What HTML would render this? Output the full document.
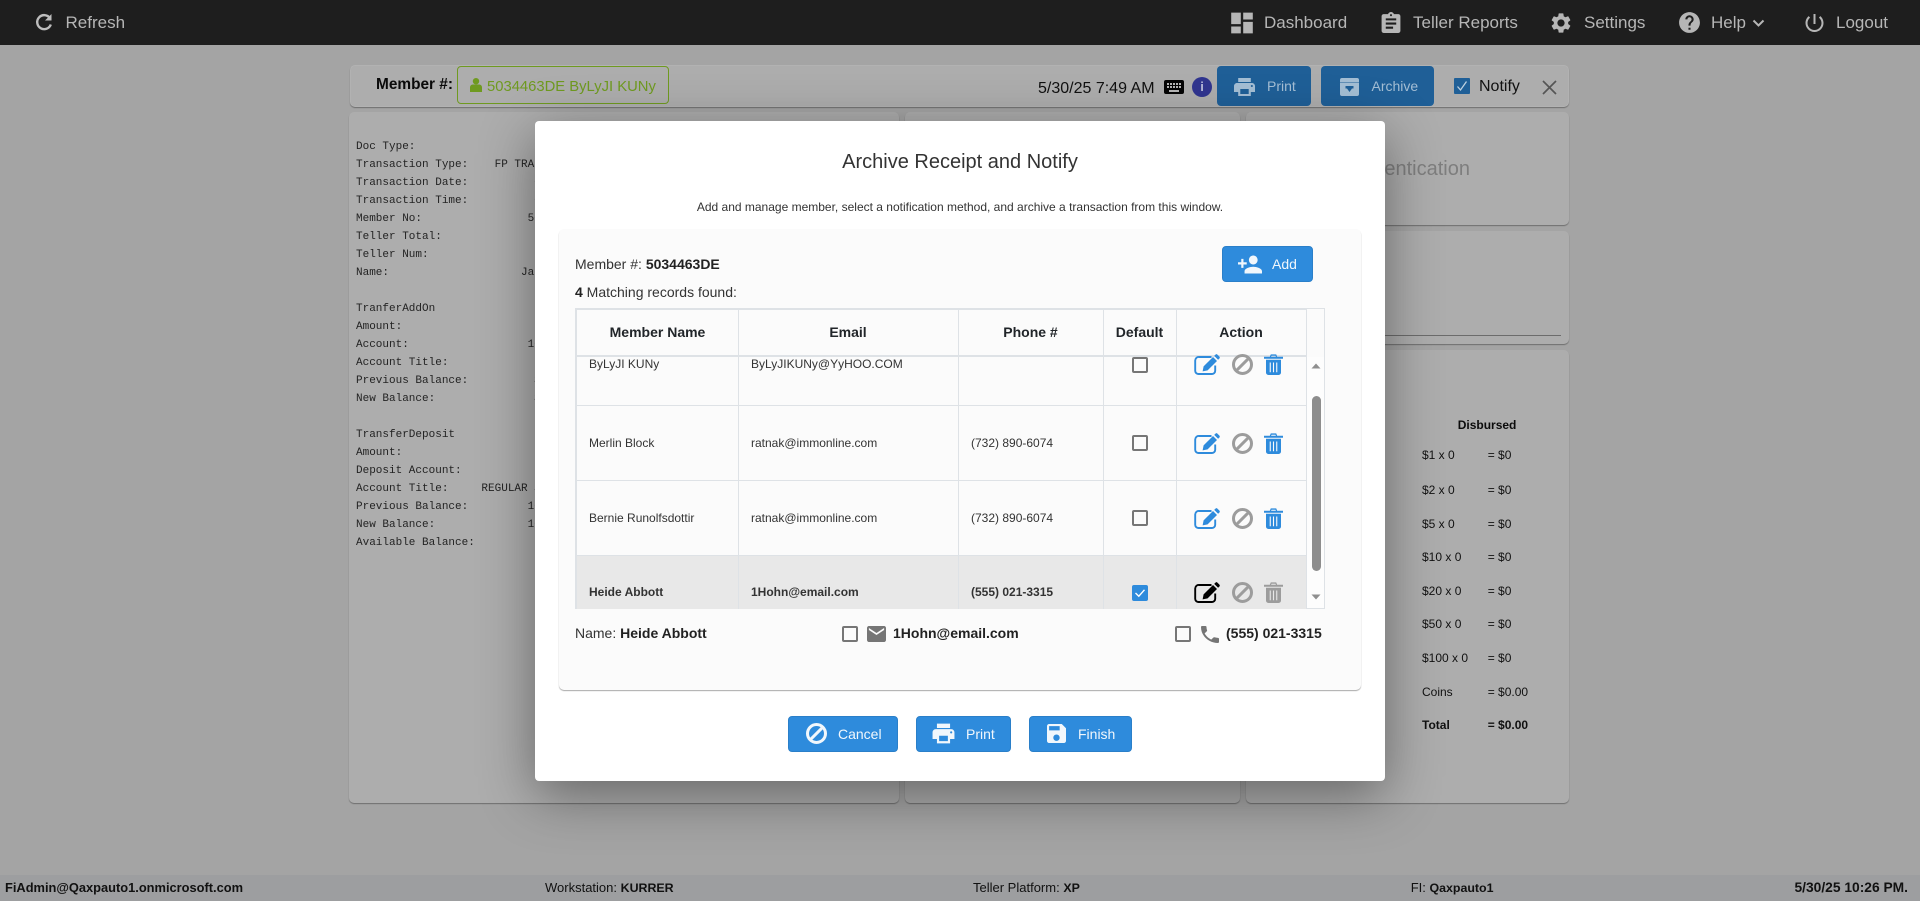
<!DOCTYPE html>
<html lang="en"><head><meta charset="utf-8"><title>Archive Receipt and Notify</title>
<style>
html,body{margin:0;padding:0}
body{width:1920px;height:901px;position:relative;overflow:hidden;background:#a4a4a4;font-family:"Liberation Sans",Arial,sans-serif;color:#333}
.a,.t{position:absolute;white-space:nowrap}
.t{line-height:20px}
svg{position:absolute;display:block}
.nav{font-size:17px;color:#b6b6b6}
.panel{position:absolute;background:#adadad;border-radius:5px;box-shadow:0 1px 1px #6e6e6e}
.btn{position:absolute;background:#2e8bdc;border:1px solid #2a7fc9;border-radius:4px;box-sizing:border-box}
.wt{color:#f1f7fc;font-size:14px}
.dbtn{position:absolute;background:#1f5f97;border-radius:4px}
.dt{color:#a4bed4;font-size:14px}
.mono{position:absolute;left:356px;top:138px;margin:0;font:11px/18px "Liberation Mono",monospace;color:#232323}
.m{font-size:12px;color:#111}
.h{font-weight:bold;font-size:14px;color:#212529;text-align:center}
.c{font-size:12px;color:#333}
.cb{position:absolute;width:16px;height:16px;box-sizing:border-box;border:2px solid #767676;border-radius:2px;background:#fbfbfb}
.vl{position:absolute;width:1px;background:#dee2e6}
.hl{position:absolute;height:1px;background:#dee2e6}
.f{font-size:13px;color:#111}
.f b{font-size:12.4px}
</style></head><body>
<svg width="0" height="0" style="position:absolute">
<defs>
<symbol id="edit" viewBox="0 0 26 21">
<path d="M17.5 3H5A3.500 3.500 0 0 0 1.200 6.500V16.800A3.200 3.200 0 0 0 4.400 20H18a3.200 3.200 0 0 0 3.200-3.200V11.500" fill="none" stroke="currentColor" stroke-width="1.900"/>
<path d="M9.600 12.400 19 3l4 4-9.400 9.400-5 1z" fill="currentColor"/>
<path d="M20.200 1.900l1.200-1.200a1.500 1.500 0 0 1 2.100 0l1.800 1.800a1.500 1.500 0 0 1 0 2.100l-1.200 1.200z" fill="currentColor"/>
</symbol>
<symbol id="block" viewBox="0 0 21 21">
<circle cx="10.500" cy="10.500" r="9" fill="none" stroke="currentColor" stroke-width="3"/>
<path d="M4.200 16.800 16.800 4.200" stroke="currentColor" stroke-width="3"/>
</symbol>
<symbol id="trash" viewBox="0 0 19 21">
<path d="M0 2.800h5.800l1-2.400h5.400l1 2.400H19v2H0zM7.600 1.800 7 2.800h5l-.6-1z" fill="currentColor" fill-rule="evenodd"/>
<path d="M2 5.800h15v12.800a2.400 2.400 0 0 1-2.400 2.400H4.400A2.400 2.400 0 0 1 2 18.600zM5.700 8.500v9.800h1.100V8.500zM8.950 8.500v9.800h1.100V8.500zM12.200 8.500v9.800h1.100V8.500z" fill="currentColor" fill-rule="evenodd"/>
</symbol>
</defs>
</svg>

<!-- header -->
<div class="a" style="left:0;top:0;width:1920px;height:45px;background:#1e1e1e"></div>
<svg style="left:35px;top:13px" width="18" height="19" viewBox="0 0 18 19"><path d="M15 5.200A7 7 0 1 0 15.800 11.500" fill="none" stroke="#bdbdbd" stroke-width="2.400"/><path d="M16.500 1v6.500H10z" fill="#bdbdbd"/></svg>
<div class="t nav" style="left:65.500px;top:12.500px">Refresh</div>
<svg style="left:1230px;top:12px" width="24" height="22" viewBox="2 2.500 20 19" preserveAspectRatio="none" fill="#b6b6b6"><path d="M3 13h8V3H3v10zm0 8h8v-6H3v6zm10 0h8V11h-8v10zm0-18v6h8V3h-8z"/></svg>
<div class="t nav" style="left:1264px;top:12.500px">Dashboard</div>
<svg style="left:1379px;top:11px" width="24" height="23" viewBox="1 0 22 22" fill="#b6b6b6"><path d="M19 3h-4.180C14.400 1.840 13.300 1 12 1c-1.300 0-2.400.84-2.820 2H5c-1.100 0-2 .9-2 2v14c0 1.100.9 2 2 2h14c1.100 0 2-.9 2-2V5c0-1.100-.9-2-2-2zm-7 0c.55 0 1 .45 1 1s-.45 1-1 1-1-.45-1-1 .45-1 1-1zm2 14H7v-2h7v2zm3-4H7v-2h10v2zm0-4H7V7h10v2z"/></svg>
<div class="t nav" style="left:1413px;top:12.500px">Teller Reports</div>
<svg style="left:1549px;top:11px" width="24" height="24" viewBox="0 0 24 24" fill="#b6b6b6"><path d="M19.140 12.940c.04-.3.06-.61.06-.94 0-.32-.02-.64-.07-.94l2.030-1.580c.18-.14.23-.41.12-.61l-1.920-3.320c-.12-.22-.37-.29-.59-.22l-2.390.96c-.5-.38-1.030-.7-1.620-.94l-.36-2.540c-.04-.24-.24-.41-.48-.41h-3.840c-.24 0-.43.17-.47.41l-.36 2.540c-.59.24-1.130.57-1.620.94l-2.390-.96c-.22-.08-.47 0-.59.22L2.740 8.870c-.12.21-.08.47.12.61l2.030 1.580c-.05.3-.09.63-.09.94s.02.64.07.94l-2.030 1.580c-.18.14-.23.41-.12.61l1.920 3.320c.12.22.37.29.59.22l2.390-.96c.5.38 1.030.7 1.620.94l.36 2.540c.05.24.24.41.48.41h3.840c.24 0 .44-.17.47-.41l.36-2.540c.59-.24 1.130-.56 1.620-.94l2.390.96c.22.08.47 0 .59-.22l1.920-3.320c.12-.22.07-.47-.12-.61l-2.010-1.580zM12 15.600c-1.980 0-3.600-1.620-3.600-3.600s1.620-3.600 3.600-3.600 3.600 1.620 3.600 3.600-1.620 3.600-3.600 3.600z"/></svg>
<div class="t nav" style="left:1584px;top:12.500px">Settings</div>
<svg style="left:1677px;top:10px" width="25" height="25" viewBox="0 0 24 24" fill="#b6b6b6"><path d="M12 2C6.480 2 2 6.480 2 12s4.480 10 10 10 10-4.480 10-10S17.520 2 12 2zm1 17h-2v-2h2v2zm2.070-7.750l-.9.92C13.450 12.900 13 13.500 13 15h-2v-.5c0-1.100.45-2.100 1.170-2.830l1.240-1.260c.37-.36.59-.86.59-1.410 0-1.100-.9-2-2-2s-2 .9-2 2H8c0-2.210 1.790-4 4-4s4 1.790 4 4c0 .88-.36 1.680-.93 2.250z"/></svg>
<div class="t nav" style="left:1711px;top:12.500px">Help</div>
<svg style="left:1752px;top:19px" width="13" height="9" viewBox="0 0 13 9"><path d="M1.500 1.500 6.500 6.500 11.500 1.500" fill="none" stroke="#b6b6b6" stroke-width="2"/></svg>
<svg style="left:1802px;top:11px" width="25" height="24" viewBox="0 0 24 24" fill="#b6b6b6"><path d="M13 3h-2v10h2V3zm4.830 2.170l-1.420 1.420C17.990 7.860 19 9.810 19 12c0 3.870-3.130 7-7 7s-7-3.130-7-7c0-2.190 1.010-4.140 2.580-5.420L6.170 5.170C4.230 6.820 3 9.260 3 12c0 4.970 4.030 9 9 9s9-4.030 9-9c0-2.740-1.230-5.180-3.170-6.830z"/></svg>
<div class="t nav" style="left:1836px;top:12.500px">Logout</div>

<!-- member bar -->
<div class="panel" style="left:350px;top:65px;width:1219px;height:42px;box-sizing:border-box;border:1px solid #b2b2b2"></div>
<div class="t" style="left:376px;top:74.500px;font-size:15.400px;font-weight:bold;color:#0a0a0a">Member #:</div>
<div class="a" style="left:457px;top:66px;width:212px;height:38px;box-sizing:border-box;border:1px solid #6f9a20;border-radius:4px"></div>
<svg style="left:470px;top:78px" width="12" height="14" viewBox="0 0 12 14" fill="#6f9a20"><circle cx="6" cy="3.200" r="3.200"/><path d="M0 14V9.500C0 7.500 1.500 6.500 3 6.500h6c1.500 0 3 1 3 3V14z"/></svg>
<div class="t" style="left:487px;top:77px;font-size:14.800px;color:#6f9a20">5034463DE ByLyJI KUNy</div>
<div class="t" style="left:1038px;top:78.500px;font-size:16px;color:#111">5/30/25 7:49 AM</div>
<div class="a" style="left:1164px;top:80px;width:20px;height:14px;background:#050505;border-radius:2px"></div>
<div class="a" style="left:1166.500px;top:82.500px;width:15px;height:2px;background:repeating-linear-gradient(90deg,#b5b5b5 0 2px,#050505 2px 3px)"></div>
<div class="a" style="left:1166.500px;top:85.500px;width:15px;height:2px;background:repeating-linear-gradient(90deg,#b5b5b5 0 2px,#050505 2px 3px)"></div>
<div class="a" style="left:1169px;top:89.500px;width:10px;height:2px;background:#b5b5b5"></div>
<div class="a" style="left:1192px;top:77px;width:20px;height:20px;border-radius:50%;background:#30358f;color:#b8bada;font:bold 13px/20px 'Liberation Sans',sans-serif;text-align:center">i</div>
<div class="dbtn" style="left:1217px;top:66px;width:94px;height:40px"></div>
<svg style="left:1234px;top:78px" width="21" height="18" viewBox="2 3 20 18" preserveAspectRatio="none" fill="#a4bed4"><path d="M19 8H5c-1.660 0-3 1.340-3 3v6h4v4h12v-4h4v-6c0-1.660-1.340-3-3-3zm-3 11H8v-5h8v5zm3-7c-.55 0-1-.45-1-1s.45-1 1-1 1 .45 1 1-.45 1-1 1zm-1-9H6v4h12V3z"/></svg>
<div class="t dt" style="left:1267px;top:76px">Print</div>
<div class="dbtn" style="left:1321px;top:66px;width:113px;height:40px"></div>
<svg style="left:1340px;top:78px" width="19" height="18" viewBox="0 0 19 18"><path d="M2 0h15a2 2 0 0 1 2 2v2.500H0V2a2 2 0 0 1 2-2zM0 5h19v11a2 2 0 0 1-2 2H2a2 2 0 0 1-2-2z" fill="#a4bed4"/><path d="M5.500 8h8v2.500h-1.500L9.500 14 7 10.500H5.500z" fill="#1f5f97"/></svg>
<div class="t dt" style="left:1371.500px;top:76px">Archive</div>
<div class="a" style="left:1454px;top:78px;width:16px;height:16px;background:#1f5f97;border-radius:1px"></div>
<svg style="left:1454px;top:78px" width="16" height="16" viewBox="0 0 16 16"><path d="M3.500 8.500 6.500 12 12.500 3.500" fill="none" stroke="#bcd0e0" stroke-width="1.300"/></svg>
<div class="t" style="left:1479px;top:76.500px;font-size:16px;color:#111">Notify</div>
<svg style="left:1542px;top:80px" width="15" height="15" viewBox="0 0 15 15"><path d="M1 1 14 14M14 1 1 14" stroke="#555" stroke-width="1.700"/></svg>

<!-- background panels -->
<div class="panel" style="left:349px;top:112px;width:550px;height:691px"></div>
<pre class="mono">Doc Type:
Transaction Type:    FP TRANSFER
Transaction Date:          05/30/25
Transaction Time:          07:49
Member No:                5034463DE
Teller Total:
Teller Num:
Name:                    Jane

TranferAddOn
Amount:
Account:                  1000
Account Title:
Previous Balance:          $0
New Balance:               $0

TransferDeposit
Amount:
Deposit Account:
Account Title:     REGULAR SAVINGS
Previous Balance:         1000
New Balance:              1000
Available Balance:</pre>
<div class="panel" style="left:905px;top:112px;width:335px;height:691px"></div>
<div class="panel" style="left:1246px;top:112px;width:323px;height:113px"></div>
<div class="t" style="right:450px;top:158.500px;font-size:20px;color:#7e7e7e">Authentication</div>
<div class="panel" style="left:1246px;top:231px;width:323px;height:113px"></div>
<div class="a" style="left:1260px;top:335px;width:301px;height:1px;background:#6c6c6c"></div>
<div class="panel" style="left:1246px;top:350px;width:323px;height:453px"></div>
<div class="t" style="left:1457.700px;top:415px;font-size:12px;font-weight:bold;color:#0c0c0c">Disbursed</div>
<div class="t m" style="left:1422px;top:445px">$1 x 0</div><div class="t m" style="left:1487.700px;top:445px">= $0</div>
<div class="t m" style="left:1422px;top:479.700px">$2 x 0</div><div class="t m" style="left:1487.700px;top:479.700px">= $0</div>
<div class="t m" style="left:1422px;top:513.700px">$5 x 0</div><div class="t m" style="left:1487.700px;top:513.700px">= $0</div>
<div class="t m" style="left:1422px;top:546.700px">$10 x 0</div><div class="t m" style="left:1487.700px;top:546.700px">= $0</div>
<div class="t m" style="left:1422px;top:580.700px">$20 x 0</div><div class="t m" style="left:1487.700px;top:580.700px">= $0</div>
<div class="t m" style="left:1422px;top:613.700px">$50 x 0</div><div class="t m" style="left:1487.700px;top:613.700px">= $0</div>
<div class="t m" style="left:1422px;top:647.700px">$100 x 0</div><div class="t m" style="left:1487.700px;top:647.700px">= $0</div>
<div class="t m" style="left:1422px;top:681.700px">Coins</div><div class="t m" style="left:1487.700px;top:681.700px">= $0.00</div>
<div class="t m" style="left:1422px;top:714.700px;font-weight:bold">Total</div><div class="t m" style="left:1487.700px;top:714.700px;font-weight:bold">= $0.00</div>

<!-- footer -->
<div class="a" style="left:0;top:875px;width:1920px;height:26px;background:#9d9ea0"></div>
<div class="t f" style="left:5px;top:878px;font-weight:bold;font-size:12.850px">FiAdmin@Qaxpauto1.onmicrosoft.com</div>
<div class="t f" style="left:545px;top:878px">Workstation: <b>KURRER</b></div>
<div class="t f" style="left:973px;top:878px">Teller Platform: <b>XP</b></div>
<div class="t f" style="left:1410.700px;top:878px">FI: <b>Qaxpauto1</b></div>
<div class="t f" style="right:12px;top:878px;font-weight:bold;font-size:13.800px">5/30/25 10:26 PM.</div>

<!-- modal -->
<div class="a" style="left:535px;top:121px;width:850px;height:660px;background:#fff;border-radius:4px;box-shadow:0 14px 55px rgba(0,0,0,.42)"></div>
<div class="t" style="left:535px;width:850px;text-align:center;top:151.500px;font-size:20px;color:#333">Archive Receipt and Notify</div>
<div class="t" style="left:535px;width:850px;text-align:center;top:197px;font-size:12px;color:#333">Add and manage member, select a notification method, and archive a transaction from this window.</div>
<div class="a" style="left:559px;top:229px;width:802px;height:461px;background:#fbfbfb;border-radius:5px;box-shadow:0 1px 1px #a8a8a8"></div>

<div class="t" style="left:575px;top:254px;font-size:14px;color:#333">Member #: <b style="color:#222">5034463DE</b></div>
<div class="t" style="left:575px;top:282px;font-size:14px;color:#333"><b style="color:#222">4</b> Matching records found:</div>

<div class="btn" style="left:1222px;top:246px;width:91px;height:36px"></div>
<svg style="left:1238px;top:255px" width="24" height="19" viewBox="1 3.500 22 17" preserveAspectRatio="none" fill="#f1f7fc"><path d="M15 12c2.210 0 4-1.790 4-4s-1.790-4-4-4-4 1.790-4 4 1.790 4 4 4zm-9-2V7H4v3H1v2h3v3h2v-3h3v-2H6zm9 4c-2.670 0-8 1.340-8 4v2h16v-2c0-2.660-5.330-4-8-4z"/></svg>
<div class="t wt" style="left:1272px;top:254px">Add</div>

<!-- table -->
<div class="a" style="left:575px;top:308px;width:750px;height:301px;background:#fbfbfb;overflow:hidden">
  <!-- selected row -->
  <div class="a" style="left:0;top:247px;width:731px;height:54px;background:#e8e8e8"></div>
  <div class="hl" style="left:0;top:97px;width:731px"></div>
  <div class="hl" style="left:0;top:172px;width:731px"></div>
  <div class="hl" style="left:0;top:247px;width:731px"></div>
  <div class="vl" style="left:163px;top:0;height:301px"></div>
  <div class="vl" style="left:383px;top:0;height:301px"></div>
  <div class="vl" style="left:528px;top:0;height:301px"></div>
  <div class="vl" style="left:601px;top:0;height:301px"></div>
  <div class="vl" style="left:731px;top:0;height:301px"></div>
  <div class="a" style="left:0;top:0;width:2px;height:301px;background:#dee2e6"></div>
  <div class="a" style="left:0;top:0;width:731px;height:2px;background:#dee2e6"></div>
  <div class="a" style="left:749px;top:0;width:1px;height:301px;background:#dee2e6"></div>
  <div class="a" style="left:731px;top:0;width:19px;height:1px;background:#dee2e6"></div>
  <div class="a" style="left:731px;top:300px;width:19px;height:1px;background:#dee2e6"></div>
  <div class="a" style="left:0;top:47px;width:731px;height:2px;background:#dee2e6"></div>
  <!-- headers -->
  <div class="t h" style="left:2px;width:161px;top:14px">Member Name</div>
  <div class="t h" style="left:163px;width:220px;top:14px">Email</div>
  <div class="t h" style="left:383px;width:145px;top:14px">Phone #</div>
  <div class="t h" style="left:528px;width:73px;top:14px">Default</div>
  <div class="t h" style="left:601px;width:130px;top:14px">Action</div>
  <!-- rows -->
  <div class="t c" style="left:14px;top:46px">ByLyJI KUNy</div>
  <div class="t c" style="left:176px;top:46px">ByLyJIKUNy@YyHOO.COM</div>
  <div class="t c" style="left:14px;top:124.700px">Merlin Block</div>
  <div class="t c" style="left:176px;top:124.700px">ratnak@immonline.com</div>
  <div class="t c" style="left:396px;top:124.700px">(732) 890-6074</div>
  <div class="t c" style="left:14px;top:199.700px">Bernie Runolfsdottir</div>
  <div class="t c" style="left:176px;top:199.700px">ratnak@immonline.com</div>
  <div class="t c" style="left:396px;top:199.700px">(732) 890-6074</div>
  <div class="t c" style="left:14px;top:273.700px;font-weight:bold;color:#333">Heide Abbott</div>
  <div class="t c" style="left:176px;top:273.700px;font-weight:bold;color:#333">1Hohn@email.com</div>
  <div class="t c" style="left:396px;top:273.700px;font-weight:bold;color:#333">(555) 021-3315</div>
  <!-- checkboxes -->
  <div class="cb" style="left:557px;top:49px;border-top-width:2px"></div>
  <div class="cb" style="left:557px;top:127px"></div>
  <div class="cb" style="left:557px;top:202px"></div>
  <div class="a" style="left:557px;top:277px;width:16px;height:16px;background:#2e8bdc;border-radius:2px"></div>
  <svg style="left:557px;top:277px" width="16" height="16" viewBox="0 0 16 16"><path d="M3.500 8 6.800 11.200 12.500 4.800" fill="none" stroke="#fff" stroke-width="1.400"/></svg>
  <!-- action icons -->
  <svg style="left:619px;top:46px;color:#2e8bdc" width="26" height="21"><use href="#edit"/></svg>
  <svg style="left:657px;top:46px;color:#9c9c9c" width="21" height="21"><use href="#block"/></svg>
  <svg style="left:689px;top:46px;color:#2e8bdc" width="19" height="21"><use href="#trash"/></svg>
  <svg style="left:619px;top:125px;color:#2e8bdc" width="26" height="21"><use href="#edit"/></svg>
  <svg style="left:657px;top:125px;color:#9c9c9c" width="21" height="21"><use href="#block"/></svg>
  <svg style="left:689px;top:125px;color:#2e8bdc" width="19" height="21"><use href="#trash"/></svg>
  <svg style="left:619px;top:200px;color:#2e8bdc" width="26" height="21"><use href="#edit"/></svg>
  <svg style="left:657px;top:200px;color:#9c9c9c" width="21" height="21"><use href="#block"/></svg>
  <svg style="left:689px;top:200px;color:#2e8bdc" width="19" height="21"><use href="#trash"/></svg>
  <svg style="left:619px;top:274px;color:#000" width="26" height="21"><use href="#edit"/></svg>
  <svg style="left:657px;top:274px;color:#9c9c9c" width="21" height="21"><use href="#block"/></svg>
  <svg style="left:689px;top:274px;color:#9c9c9c" width="19" height="21"><use href="#trash"/></svg>
  <!-- scrollbar -->
  <div class="a" style="left:732px;top:49px;width:17px;height:251px;background:#fdfdfd"></div>
  <svg style="left:736px;top:55px" width="10" height="6" viewBox="0 0 10 6"><path d="M5 .5 9.500 5.500H.5z" fill="#8f8f8f"/></svg>
  <svg style="left:736px;top:286px" width="10" height="6" viewBox="0 0 10 6"><path d="M5 5.500 9.500 .5H.5z" fill="#8f8f8f"/></svg>
  <div class="a" style="left:737px;top:88px;width:9px;height:175px;background:#8d8d8d;border-radius:4.500px"></div>
</div>

<!-- selection line -->
<div class="t" style="left:575px;top:623px;font-size:14px;color:#333">Name: <b style="color:#222">Heide Abbott</b></div>
<div class="cb" style="left:842px;top:626px"></div>
<svg style="left:867px;top:626px" width="19" height="16" viewBox="2 4 20 16" preserveAspectRatio="none" fill="#757575"><path d="M20 4H4c-1.100 0-1.990.9-1.990 2L2 18c0 1.100.9 2 2 2h16c1.100 0 2-.9 2-2V6c0-1.100-.9-2-2-2zm0 4l-8 5-8-5V6l8 5 8-5v2z"/></svg>
<div class="t" style="left:893px;top:623px;font-size:14px;font-weight:bold;color:#222">1Hohn@email.com</div>
<div class="cb" style="left:1175px;top:626px"></div>
<svg style="left:1201px;top:626px" width="18" height="17" viewBox="3 3 18 18" preserveAspectRatio="none" fill="#757575"><path d="M6.620 10.790c1.440 2.830 3.760 5.140 6.590 6.590l2.200-2.200c.27-.27.67-.36 1.020-.24 1.120.37 2.330.57 3.570.57.55 0 1 .45 1 1V20c0 .55-.45 1-1 1-9.390 0-17-7.610-17-17 0-.55.45-1 1-1h3.500c.55 0 1 .45 1 1 0 1.250.2 2.450.57 3.570.11.35.03.74-.25 1.020l-2.200 2.200z"/></svg>
<div class="t" style="left:1226px;top:623px;font-size:14px;font-weight:bold;color:#222">(555) 021-3315</div>

<!-- footer buttons -->
<div class="btn" style="left:788px;top:716px;width:110px;height:36px"></div>
<svg style="left:806px;top:723px;color:#f1f7fc" width="21" height="21"><use href="#block"/></svg>
<div class="t wt" style="left:838px;top:724px">Cancel</div>
<div class="btn" style="left:916px;top:716px;width:95px;height:36px"></div>
<svg style="left:932px;top:722px" width="23" height="23" viewBox="1.500 2 21 20" fill="#f1f7fc"><path d="M19 8H5c-1.660 0-3 1.340-3 3v6h4v4h12v-4h4v-6c0-1.660-1.340-3-3-3zm-3 11H8v-5h8v5zm3-7c-.55 0-1-.45-1-1s.45-1 1-1 1 .45 1 1-.45 1-1 1zm-1-9H6v4h12V3z"/></svg>
<div class="t wt" style="left:966px;top:724px">Print</div>
<div class="btn" style="left:1029px;top:716px;width:103px;height:36px"></div>
<svg style="left:1047px;top:724px" width="19" height="19" viewBox="3 3 18 18" fill="#f1f7fc"><path d="M17 3H5c-1.110 0-2 .9-2 2v14c0 1.100.89 2 2 2h14c1.100 0 2-.9 2-2V7l-4-4zm-5 16c-1.660 0-3-1.340-3-3s1.340-3 3-3 3 1.340 3 3-1.340 3-3 3zm3-10H5V5h10v4z"/></svg>
<div class="t wt" style="left:1078px;top:724px">Finish</div>
</body></html>
